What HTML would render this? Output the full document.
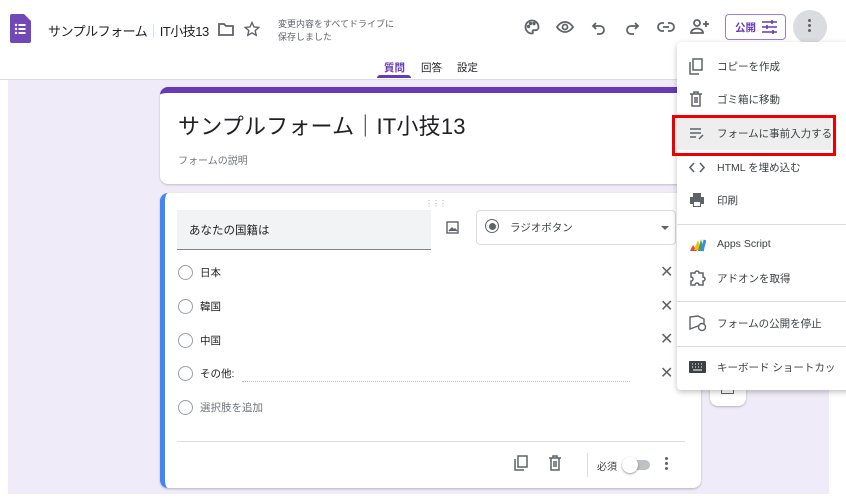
<!DOCTYPE html>
<html><head><meta charset="utf-8"><style>
*{box-sizing:border-box;margin:0;padding:0}
body{width:846px;height:501px;position:relative;overflow:hidden;background:#fff;font-family:"Liberation Sans","Noto Sans CJK JP",sans-serif;color:#202124}
.a{position:absolute}
.ic{position:absolute;fill:none;stroke:#5f6368;stroke-width:1.8}
.mi{position:absolute;left:677px;width:169px;height:33px;font-size:10.5px;color:#3c4043}
.mi span{position:absolute;left:40px;top:9px;white-space:nowrap}
.mi svg{position:absolute;left:12px;top:8px}
.sep{position:absolute;left:677px;width:169px;height:1px;background:#dadce0}
.opt{position:absolute;left:178px;height:16px;font-size:10.5px;color:#202124;display:flex;align-items:center;white-space:nowrap}
.rad{width:15px;height:15px;border:1.5px solid #9aa0a6;border-radius:50%;margin-right:7px;flex:none}
.x{position:absolute;left:660px;font-size:16px;color:#5f6368}
</style></head><body>
<div class="a" style="left:8px;top:80px;width:821px;height:414px;background:#efebf8"></div>
<div class="a" style="left:0;top:79px;width:846px;height:1px;background:#dadce0"></div>
<svg class="a" style="left:10px;top:14px" width="21" height="29" viewBox="0 0 21 29"><path d="M0 2a2 2 0 0 1 2-2h12l7 7v20a2 2 0 0 1-2 2H2a2 2 0 0 1-2-2z" fill="#7248b9"/><g fill="#fff"><circle cx="6" cy="11" r="1.2"/><circle cx="6" cy="15" r="1.2"/><circle cx="6" cy="19" r="1.2"/><rect x="8.5" y="10" width="7" height="2"/><rect x="8.5" y="14" width="7" height="2"/><rect x="8.5" y="18" width="7" height="2"/></g></svg>
<div class="a" style="left:48px;top:21px;font-size:13px;color:#202124;white-space:nowrap;letter-spacing:-0.5px">サンプルフォーム<span style="color:#9fc3e7">｜</span>IT小技13</div>
<svg class="ic" style="left:218px;top:22px" width="16" height="14"><path d="M1 2h5l2 2h7v9H1z"/></svg>
<svg class="ic" style="left:244px;top:21px;stroke-width:1.4" width="16" height="16"><path d="M8 1.5l2 4.4 4.8.5-3.6 3.2 1 4.7L8 11.9l-4.2 2.4 1-4.7L1.2 6.4 6 5.9z"/></svg>
<div class="a" style="left:278px;top:18px;font-size:9px;color:#5f6368;line-height:13px">変更内容をすべてドライブに<br>保存しました</div>
<svg class="ic" style="left:524px;top:19px" width="16" height="16"><path d="M8 1.5a6.5 6.5 0 1 0 0 13c1 0 1.2-.8.7-1.5-.6-.8 0-1.8 1-1.8h2a3 3 0 0 0 2.8-3C14.5 4.3 11.6 1.5 8 1.5z"/><circle cx="4.5" cy="7.5" r=".8"/><circle cx="6.5" cy="4.5" r=".8"/><circle cx="10" cy="4.5" r=".8"/></svg>
<svg class="ic" style="left:556px;top:19px" width="18" height="16"><path d="M1 8s3-5 8-5 8 5 8 5-3 5-8 5-8-5-8-5z"/><circle cx="9" cy="8" r="2.5"/></svg>
<svg class="ic" style="left:591px;top:19px" width="16" height="16"><path d="M5 4L2 7l3 3M2 7h7a4 4 0 0 1 0 8H6"/></svg>
<svg class="ic" style="left:624px;top:19px" width="16" height="16"><path d="M11 4l3 3-3 3M14 7H7a4 4 0 0 0 0 8h3"/></svg>
<svg class="ic" style="left:657px;top:20px" width="18" height="14"><path d="M7 3H5a4 4 0 0 0 0 8h2M11 3h2a4 4 0 0 1 0 8h-2M6 7h6"/></svg>
<svg class="ic" style="left:690px;top:18px" width="20" height="18"><circle cx="7" cy="5" r="3"/><path d="M1 15c0-3 3-4.5 6-4.5s6 1.5 6 4.5zM16 3v6M13 6h6"/></svg>
<div class="a" style="left:725px;top:14px;width:61px;height:26px;border:1px solid #9b7ed8;border-radius:4px"></div>
<div class="a" style="left:735px;top:20px;color:#673ab7;font-size:10.5px;font-weight:bold">公開</div>
<svg class="a" style="left:762px;top:20px" width="15" height="14" stroke="#673ab7" stroke-width="1.6"><path d="M0 2h15M0 7h15M0 12h15M10 0v4M5 5v4M11 10v4"/></svg>
<div class="a" style="left:793px;top:10px;width:34px;height:34px;border-radius:50%;background:#dadce0"></div>
<div class="a" style="left:808px;top:19px;width:3px;height:3px;background:#5f6368;border-radius:50%;box-shadow:0 5px #5f6368,0 10px #5f6368"></div>
<div class="a" style="left:384px;top:60px;font-size:10.5px;color:#673ab7;font-weight:bold">質問</div>
<div class="a" style="left:377px;top:75px;width:34px;height:3px;background:#673ab7;border-radius:3px 3px 0 0"></div>
<div class="a" style="left:421px;top:60px;font-size:10.5px;color:#202124">回答</div>
<div class="a" style="left:457px;top:60px;font-size:10.5px;color:#202124">設定</div>
<div class="a" style="left:160px;top:87px;width:545px;height:97px;background:#fff;border-radius:8px;border-top:6px solid #673ab7;box-shadow:0 1px 2px rgba(0,0,0,.2)"></div>
<div class="a" style="left:178px;top:109px;font-size:22px;color:#202124;white-space:nowrap;letter-spacing:0.2px">サンプルフォーム｜IT小技13</div>
<div class="a" style="left:178px;top:152px;font-size:10px;color:#70757a">フォームの説明</div>
<div class="a" style="left:160px;top:193px;width:541px;height:295px;background:#fff;border-radius:8px;border-left:5px solid #4285f4;box-shadow:0 1px 2px rgba(0,0,0,.25)"></div>
<div class="a" style="left:425px;top:199px;font-size:8px;color:#9aa0a6;letter-spacing:-1px">⋮⋮⋮</div>
<div class="a" style="left:177px;top:210px;width:254px;height:40px;background:#f1f3f4;border-bottom:1px solid #80868b"></div>
<div class="a" style="left:189px;top:222px;font-size:11.5px">あなたの国籍は</div>
<svg class="ic" style="left:446px;top:221px;stroke-width:1.4" width="13" height="13"><rect x="1" y="1" width="11" height="11"/><path d="M3 10l3-3 2 2 1-1 2 2" fill="#5f6368"/></svg>
<div class="a" style="left:476px;top:210px;width:200px;height:35px;border:1px solid #dadce0;border-radius:4px"></div>
<div class="a" style="left:485px;top:219px;width:14px;height:14px;border:1.5px solid #5f6368;border-radius:50%"></div>
<div class="a" style="left:488.5px;top:222.5px;width:7px;height:7px;background:#5f6368;border-radius:50%"></div>
<div class="a" style="left:510px;top:220px;font-size:10.5px;color:#3c4043">ラジオボタン</div>
<div class="a" style="left:661px;top:226px;border:4px solid transparent;border-top:4px solid #5f6368"></div>
<div class="opt" style="top:264px"><div class="rad"></div>日本</div>
<div class="opt" style="top:298px"><div class="rad"></div>韓国</div>
<div class="opt" style="top:332px"><div class="rad"></div>中国</div>
<div class="opt" style="top:365px"><div class="rad"></div>その他:</div>
<div class="opt" style="top:399px;color:#70757a"><div class="rad"></div>選択肢を追加</div>
<div class="a" style="left:242px;top:381px;width:388px;border-top:1px dotted #bdc1c6"></div>
<div class="x" style="top:262px">✕</div><div class="x" style="top:296px">✕</div><div class="x" style="top:329px">✕</div><div class="x" style="top:363px">✕</div>
<div class="a" style="left:177px;top:441px;width:508px;height:1px;background:#dadce0"></div>
<svg class="ic" style="left:514px;top:455px;stroke-width:1.5" width="14" height="16"><rect x="4" y="1" width="9" height="11"/><path d="M1 4v11h9"/></svg>
<svg class="ic" style="left:548px;top:455px;stroke-width:1.5" width="14" height="16"><path d="M1 3h12M5 3V1h4v2M3 3v12h8V3M6 6v6M8 6v6"/></svg>
<div class="a" style="left:587px;top:453px;width:1px;height:24px;background:#dadce0"></div>
<div class="a" style="left:597px;top:458px;font-size:10px;color:#3c4043">必須</div>
<div class="a" style="left:626px;top:460px;width:24px;height:10px;border-radius:5px;background:#bdc1c6"></div>
<div class="a" style="left:622px;top:457px;width:16px;height:16px;border-radius:50%;background:#fff;box-shadow:0 1px 2px rgba(0,0,0,.4)"></div>
<div class="a" style="left:665px;top:457px;width:3px;height:3px;background:#5f6368;border-radius:50%;box-shadow:0 5px #5f6368,0 10px #5f6368"></div>
<div class="a" style="left:710px;top:360px;width:36px;height:46px;background:#fff;border-radius:8px;box-shadow:0 1px 2px rgba(0,0,0,.25)"></div>
<div class="a" style="left:721px;top:390px;width:13px;height:4px;border:1.5px solid #5f6368;border-top:none"></div>
<div class="a" style="left:677px;top:42px;width:175px;height:348px;background:#fff;border-radius:4px;box-shadow:0 2px 6px rgba(0,0,0,.25)"></div>
<div class="mi" style="top:50px"><svg class="ic" style="stroke-width:1.5" width="14" height="17"><rect x="4" y="1" width="9" height="11"/><path d="M1 4v12h9"/></svg><span>コピーを作成</span></div>
<div class="mi" style="top:83px"><svg class="ic" style="stroke-width:1.5" width="14" height="17"><path d="M1 3h12M5 3V1h4v2M3 3v12h8V3M6 6v6M8 6v6"/></svg><span>ゴミ箱に移動</span></div>
<div class="mi" style="top:117px;background:#eeeeee;width:154px"><svg class="ic" style="stroke-width:1.5" width="16" height="17"><path d="M1 4h11M1 8h11M1 12h6M10 14l4-4"/></svg><span>フォームに事前入力する</span></div>
<div class="a" style="left:672px;top:115px;width:164px;height:41px;border:3px solid #e00"></div>
<div class="mi" style="top:151px"><svg class="ic" style="stroke-width:1.6" width="16" height="17"><path d="M5 4L1 8.5 5 13M11 4l4 4.5L11 13"/></svg><span>HTML を埋め込む</span></div>
<div class="mi" style="top:184px"><svg class="a" style="left:12px;top:8px" width="16" height="16"><path d="M4 1h8v4H4z M1 5h14v7h-3v3H4v-3H1z" fill="#5f6368"/><rect x="5" y="10" width="6" height="4" fill="#fff"/></svg><span>印刷</span></div>
<div class="sep" style="top:224px"></div>
<div class="mi" style="top:229px"><svg class="a" style="left:12px;top:8px" width="17" height="16"><path d="M1 14l3-6 4 6z" fill="#ea4335"/><path d="M5 13l4-10 3 10z" fill="#fbbc04"/><path d="M9 14l3-12 3 12z" fill="#34a853"/><path d="M13 14l3-11" stroke="#4285f4" stroke-width="3"/></svg><span>Apps Script</span></div>
<div class="mi" style="top:262px"><svg class="ic" style="stroke-width:1.5" width="17" height="17"><path d="M2 3h4a2 2 0 0 1 4 0h4v4a2 2 0 0 1 0 4v4h-4a2 2 0 0 0-4 0H2v-4a2 2 0 0 0 0-4z"/></svg><span>アドオンを取得</span></div>
<div class="sep" style="top:301px"></div>
<div class="mi" style="top:307px"><svg class="ic" style="stroke-width:1.4" width="18" height="17"><path d="M1 2v12l8-3 6 2V4L9 1z"/><circle cx="13" cy="12" r="3.5" fill="#fff"/></svg><span>フォームの公開を停止</span></div>
<div class="sep" style="top:346px"></div>
<div class="mi" style="top:351px"><svg class="a" style="left:12px;top:10px" width="17" height="12"><rect width="17" height="12" rx="1" fill="#3c4043"/><path d="M3 3h1M6 3h1M9 3h1M12 3h1M3 6h1M6 6h1M9 6h1M12 6h1M4 9h9" stroke="#fff"/></svg><span>キーボード ショートカッ</span></div>
</body></html>
